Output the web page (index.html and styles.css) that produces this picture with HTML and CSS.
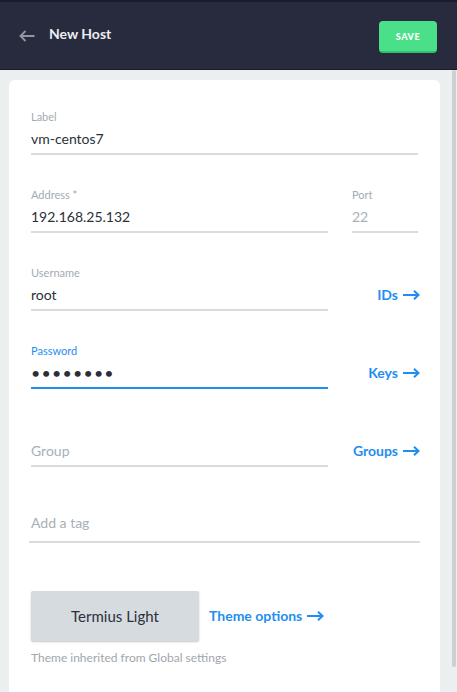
FILE: index.html
```html
<!DOCTYPE html>
<html>
<head>
<meta charset="utf-8">
<link rel="stylesheet" href="styles.css">
</head>
<body>
<div class="strip"></div>
<header class="topbar">
  <svg class="back" width="16" height="12" viewBox="0 0 16 12"><path d="M15.5 6H1.5M6.5 1L1.5 6L6.5 11" fill="none" stroke="#8d99a3" stroke-width="1.8"/></svg>
  <h1 class="title">New Host</h1>
  <button class="save">SAVE</button>
</header>
<main class="content">
  <div class="card">
    <div class="row single">
      <div class="field"><div class="lbl">Label</div><div class="val">vm-centos7</div></div>
    </div>
    <div class="row">
      <div class="field"><div class="lbl">Address *</div><div class="val">192.168.25.132</div></div>
      <div class="field port"><div class="lbl">Port</div><div class="val muted">22</div></div>
    </div>
    <div class="row">
      <div class="field"><div class="lbl">Username</div><div class="val">root</div></div>
      <a class="link">IDs <svg width="17" height="10" viewBox="0 0 17 10"><path d="M0 5H15.5M11 0.8L15.5 5L11 9.2" fill="none" stroke="#1f8ef1" stroke-width="2"/></svg></a>
    </div>
    <div class="row">
      <div class="field active"><div class="lbl">Password</div><div class="val dots">••••••••</div></div>
      <a class="link">Keys <svg width="17" height="10" viewBox="0 0 17 10"><path d="M0 5H15.5M11 0.8L15.5 5L11 9.2" fill="none" stroke="#1f8ef1" stroke-width="2"/></svg></a>
    </div>
    <div class="row">
      <div class="field"><div class="lbl"></div><div class="val muted">Group</div></div>
      <a class="link">Groups <svg width="17" height="10" viewBox="0 0 17 10"><path d="M0 5H15.5M11 0.8L15.5 5L11 9.2" fill="none" stroke="#1f8ef1" stroke-width="2"/></svg></a>
    </div>
    <div class="tag"><div class="val muted">Add a tag</div></div>
    <div class="theme">
      <button class="theme-btn">Termius Light</button>
      <a class="link theme-link">Theme options <svg width="17" height="10" viewBox="0 0 17 10"><path d="M0 5H15.5M11 0.8L15.5 5L11 9.2" fill="none" stroke="#1f8ef1" stroke-width="2"/></svg></a>
    </div>
    <p class="caption">Theme inherited from Global settings</p>
  </div>
</main>
<div class="scrollbar"></div>
</body>
</html>
```
FILE: styles.css
```css
html, body {
  margin: 0;
  padding: 0;
  height: 100%;
  overflow: hidden;
}
body {
  font-family: Lato, "Open Sans", sans-serif;
  background: #eceff0;
  color: #2c2f3a;
}
.strip {
  height: 2px;
  background: #1a1c29;
}
.topbar {
  height: 67px;
  background: #282a3d;
  border-bottom: 1px solid #1a1c29;
  display: flex;
  align-items: flex-start;
  padding: 0 20px 0 19px;
  box-sizing: content-box;
}
.back {
  margin-top: 27.5px;
  flex: none;
}
.title {
  margin: 23.5px 0 0 14px;
  font-size: 14px;
  line-height: 16px;
  font-weight: 700;
  color: #eceef1;
  flex: 1;
}
.save {
  margin-top: 19px;
  width: 58px;
  height: 32px;
  border: none;
  border-bottom: 2px solid #2cc56e;
  border-radius: 4px;
  background: #4ae08a;
  color: #fff;
  font-family: Lato, sans-serif;
  font-size: 9px;
  font-weight: 900;
  letter-spacing: 0.6px;
  padding: 0;
}
.content {
  padding: 10px 17px 0 9px;
}
.card {
  background: #fff;
  border-radius: 6px;
  padding: 31px 22px 40px 22px;
  min-height: 700px;
}
.row {
  display: grid;
  grid-template-columns: 297px 1fr;
  column-gap: 24px;
  margin-bottom: 34px;
}
.row.single {
  grid-template-columns: 1fr;
}
.field {
  display: flex;
  flex-direction: column;
  padding-bottom: 5px;
  border-bottom: 2px solid #d8dcdf;
}
.field.active {
  border-bottom-color: #1f8ef1;
}
.lbl {
  height: 12px;
  font-size: 11px;
  line-height: 12px;
  color: #a2abb2;
}
.field.active .lbl {
  color: #1f8ef1;
}
.val {
  margin-top: 7px;
  height: 18px;
  font-size: 14px;
  line-height: 18px;
  color: #2c2f3a;
}
.val.muted {
  color: #a7b0b6;
}
.val.dots {
  font-size: 16px;
  letter-spacing: 1.2px;
  color: #2c2f3a;
}
.link {
  align-self: end;
  justify-self: end;
  margin-bottom: 7px;
  margin-right: -2px;
  height: 18px;
  display: flex;
  align-items: center;
  gap: 5px;
  font-size: 14px;
  line-height: 18px;
  font-weight: 700;
  color: #1f8ef1;
}
.tag {
  margin: 46.5px -2px 0 -2px;
  padding: 0 2px 9px 2px;
  border-bottom: 2px solid #d8dcdf;
}
.tag .val {
  margin-top: 0;
}
.theme {
  margin-top: 48px;
  display: flex;
  align-items: center;
}
.theme-btn {
  width: 168px;
  height: 50px;
  border: none;
  border-radius: 2px;
  background: #d5dbdf;
  box-shadow: 0 1px 2px rgba(0, 0, 0, 0.22);
  font-family: Lato, sans-serif;
  font-size: 15px;
  color: #2c2f3a;
  padding: 0;
}
.theme-link {
  align-self: center;
  margin: 0 0 0 10px;
}
.caption {
  margin: 10px 0 0 0;
  font-size: 12px;
  line-height: 14px;
  color: #9ea6ad;
}
.scrollbar {
  position: absolute;
  left: 452px;
  top: 70px;
  width: 4px;
  height: 597px;
  border-radius: 2px;
  background: #cdd0d2;
}
```
